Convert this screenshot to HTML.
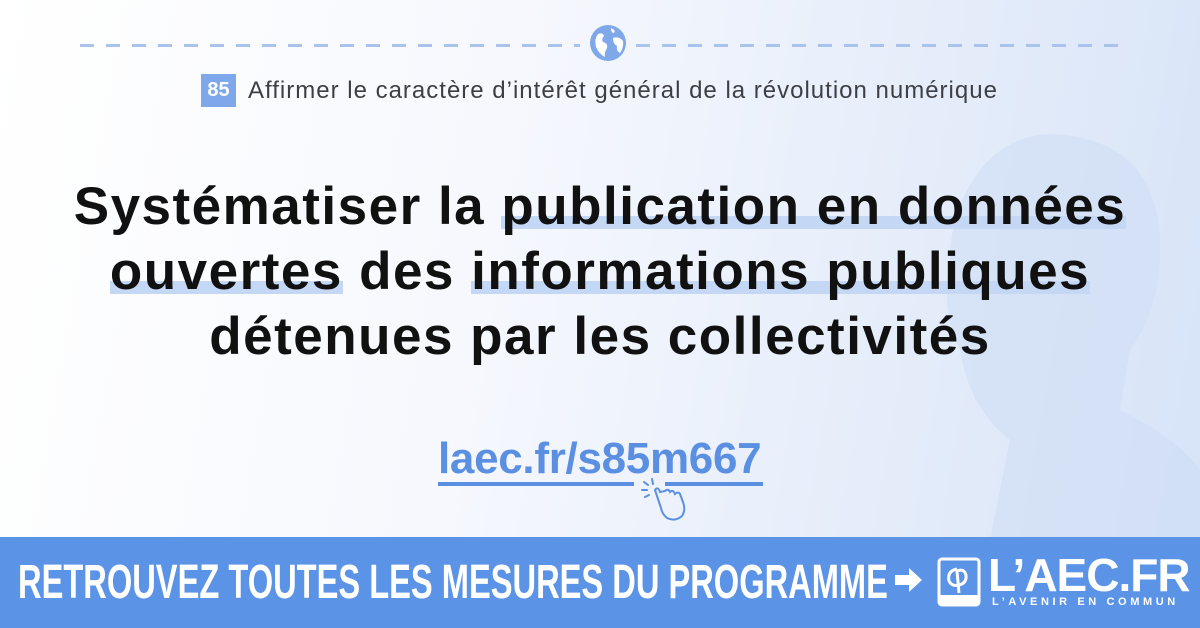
<!DOCTYPE html>
<html><head><meta charset="utf-8"><style>
*{margin:0;padding:0;box-sizing:border-box}
body{width:1200px;height:628px;overflow:hidden;position:relative;font-family:"Liberation Sans",sans-serif;background:linear-gradient(100deg,#ffffff 0%,#f6f8fd 40%,#e4ecfa 75%,#d6e3f7 100%)}
.dash{position:absolute;top:44px;height:3px;background:repeating-linear-gradient(90deg,#a9c3ec 0 14px,transparent 14px 26px)}
.hdr{position:absolute;top:74px;left:201px;display:flex;align-items:center;gap:12px}
.badge{width:35px;height:33px;background:#7ea8ea;color:#fff;font-weight:bold;font-size:20px;display:flex;align-items:center;justify-content:center}
.hdr span{font-size:24px;color:#3d3f45;letter-spacing:1px;white-space:nowrap}
.title{position:absolute;top:174px;left:0;width:1200px;text-align:center;font-size:53px;font-weight:bold;line-height:65px;color:#111;letter-spacing:1.5px;white-space:nowrap}
.hl{background:linear-gradient(transparent 66%,#c4d8f6 66%,#c4d8f6 88%,transparent 88%)}
.link{position:absolute;top:434px;left:438px;font-size:44px;font-weight:bold;color:#5b8fe2;letter-spacing:-0.3px}
.ul{position:absolute;top:482px;height:4px;background:#5b8fe2}
.banner{position:absolute;left:0;top:537px;width:1200px;height:91px;background:#5b93e6}
.bt{position:absolute;left:18px;top:555px;color:#fff;font-weight:bold;font-size:48px;transform:scaleX(0.68);transform-origin:left;white-space:nowrap}
.arr{position:absolute;left:895px;top:567px}
.logo{position:absolute;left:988px;top:548px;color:#fff;font-weight:bold;font-size:46px;letter-spacing:-1px}
.sub{position:absolute;left:992px;top:596px;color:#fff;font-weight:bold;font-size:11px;letter-spacing:3.6px;white-space:nowrap}
</style></head><body>
<svg style="position:absolute;left:860px;top:110px" width="340" height="430" viewBox="0 0 340 430"><path d="M120 60 Q160 10 230 30 Q300 50 300 140 Q300 200 270 240 L260 300 Q320 330 340 360 L340 430 L130 430 Q140 380 150 330 Q110 300 100 240 Q80 200 90 150 Q90 100 120 60Z" fill="#cddcf4" opacity="0.55"/></svg>
<div class="dash" style="left:80px;width:500px"></div>
<div class="dash" style="left:636px;width:490px"></div>
<svg style="position:absolute;left:589px;top:24px" width="38" height="38" viewBox="0 0 38 38"><circle cx="19" cy="19" r="18" fill="#7ea8ea"/><path d="M9 10 Q14 8 15 12 Q12 15 14 18 Q19 19 18 24 Q15 29 16 33 Q10 30 7 23 Q5 15 9 10Z M22 4 Q27 6 25 9 Q22 9 22 4Z M24 14 Q30 12 34 17 Q35 23 31 29 Q27 27 28 22 Q24 20 24 14Z" fill="#fff"/></svg>
<div class="hdr"><div class="badge">85</div><span>Affirmer le caractère d’intérêt général de la révolution numérique</span></div>
<div class="title">Systématiser la <span class="hl">publication en données</span><br><span class="hl">ouvertes</span> des <span class="hl">informations publiques</span><br>détenues par les collectivités</div>
<div class="link">laec.fr/s85m667</div>
<div class="ul" style="left:438px;width:196px"></div>
<div class="ul" style="left:665px;width:98px"></div>
<svg style="position:absolute;left:640px;top:478px" width="50" height="45" viewBox="0 0 50 45" fill="none" stroke="#5b8fe2" stroke-width="2" stroke-linecap="round"><path d="M4 4l4 3M2 12h5M5 19l4-2M12 1l1 5"/><path d="M20 14 Q18 8 15 12 L21 30 Q22 36 27 40 Q35 44 42 38 Q46 32 43 24 L40 16 Q38 13 35 16 Q33 11 30 14 Q28 10 25 13 Z"/></svg>
<div class="banner"></div>
<div class="bt">RETROUVEZ TOUTES LES MESURES DU PROGRAMME</div>
<svg class="arr" width="28" height="26" viewBox="0 0 28 26"><path d="M0 8h14V1l13 12-13 12v-7H0z" fill="#fff"/></svg>
<svg style="position:absolute;left:937px;top:557px" width="44" height="50" viewBox="0 0 44 50"><rect x="2" y="2" width="40" height="46" rx="3" fill="none" stroke="#fff" stroke-width="3"/><rect x="2" y="38" width="40" height="10" fill="#fff"/><path d="M20 12 Q10 14 12 24 Q15 30 22 28 Q30 26 29 18 Q27 11 20 14 L22 36" stroke="#fff" stroke-width="3" fill="none"/></svg>
<div class="logo">L’AEC.FR</div>
<div class="sub">L’AVENIR EN COMMUN</div>
</body></html>
